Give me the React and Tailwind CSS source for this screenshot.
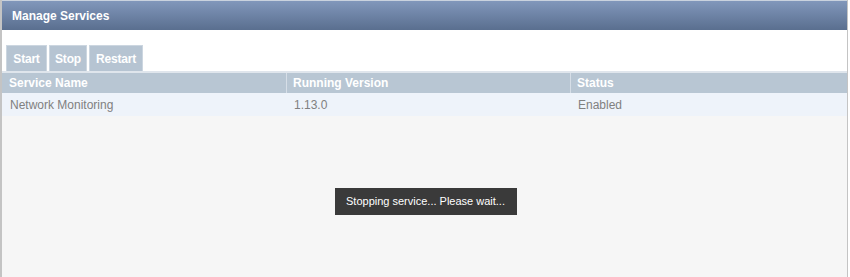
export default function App() {
  const rows = [{ name: 'Network Monitoring', version: '1.13.0', status: 'Enabled' }]
  const buttons = [
    { label: 'Start', w: 'w-[41px]' },
    { label: 'Stop', w: 'w-[38px]' },
    { label: 'Restart', w: 'w-[54px]' },
  ]

  return (
    <div className="w-[850px] h-[277px] bg-white font-['Liberation_Sans',Arial,sans-serif] text-[12px]">
      <div className="w-[848px] h-[277px] border-l-2 border-r border-[#c4c4c4] flex flex-col bg-[#f6f6f6]">
        <div className="h-[30px] shrink-0 flex items-center px-[10px] bg-gradient-to-b from-[#8197bb] to-[#5a6f8f] border-t border-[#c9d2de]">
          <span className="text-white font-bold text-[12px]">Manage Services</span>
        </div>

        <div className="bg-white pt-[15px] px-[4px] flex gap-[2px] border-b-2 border-[#dfe5ec]">
          {buttons.map(b => (
            <button
              key={b.label}
              className={`${b.w} h-[26px] bg-[#b6c4d2] text-white font-bold text-[12px] tracking-[-0.2px] border-t border-x border-[#ccd6e0] flex items-center justify-center`}
            >
              {b.label}
            </button>
          ))}
        </div>

        <div className="grid grid-cols-[285px_284px_1fr] h-[20px] bg-[#b8c6d3] text-white font-bold">
          <div className="px-[7px] flex items-center border-r border-[#d6dee7]">Service Name</div>
          <div className="px-[6px] flex items-center border-r border-[#d6dee7]">Running Version</div>
          <div className="px-[6px] flex items-center">Status</div>
        </div>

        {rows.map(r => (
          <div key={r.name} className="grid grid-cols-[285px_284px_1fr] h-[23px] bg-[#eef3fa] text-[#808080]">
            <div className="px-[8px] flex items-center">{r.name}</div>
            <div className="px-[7px] flex items-center">{r.version}</div>
            <div className="px-[7px] flex items-center">{r.status}</div>
          </div>
        ))}

        <div className="flex-1 flex justify-center pt-[72px] pl-[2px]">
          <div className="h-[27px] w-[182px] bg-[#3a3a3a] text-white text-[11px] flex items-center justify-center">
            Stopping service... Please wait...
          </div>
        </div>
      </div>
    </div>
  )
}
